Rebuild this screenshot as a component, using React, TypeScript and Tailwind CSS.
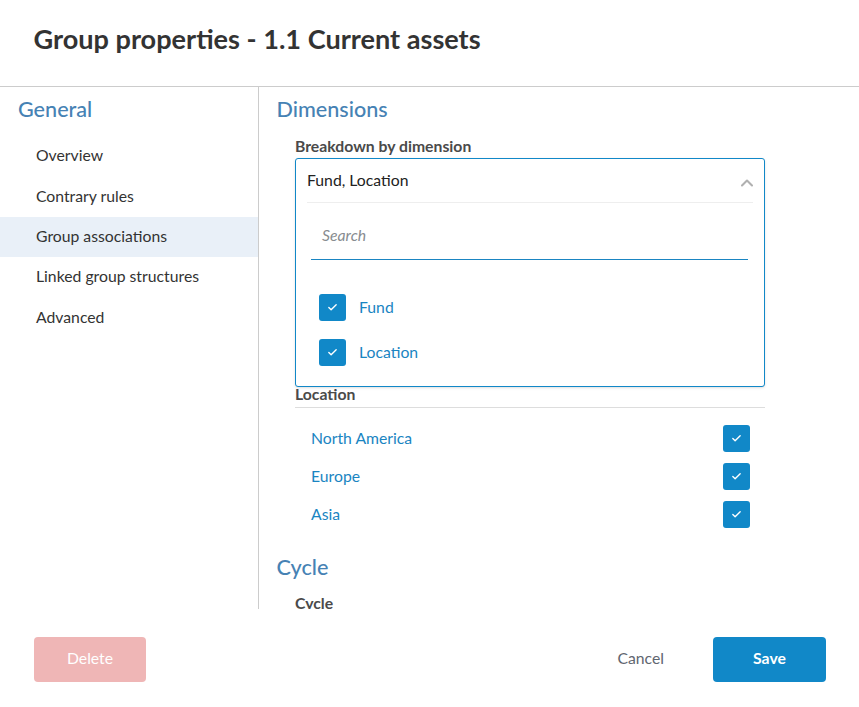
import React from "react";
import { Check, ChevronUp } from "lucide-react";

const navItems = ["Overview", "Contrary rules", "Group associations", "Linked group structures", "Advanced"];

function CheckBox() {
  return (
    <span className="flex h-[27px] w-[27px] shrink-0 items-center justify-center rounded-[3px] bg-[#1188c8] text-white">
      <Check className="h-[11px] w-[11px]" strokeWidth={3} />
    </span>
  );
}

function DimensionRow({ label }: { label: string }) {
  return (
    <div className="flex h-[38px] items-center justify-between pl-4 pr-[15px]">
      <span className="pb-[1px] text-[15.75px] text-[#1a85c2]">{label}</span>
      <CheckBox />
    </div>
  );
}

export default function App() {
  return (
    <div className="flex h-[707px] w-[859px] flex-col overflow-hidden bg-white font-['Lato',sans-serif]">
      {/* Header */}
      <div className="flex h-[87px] shrink-0 items-center border-b border-[#cccccc] pb-[7px] pl-[33.5px]">
        <h1 className="text-[27.1px] font-bold text-[#333333]">Group properties - 1.1 Current assets</h1>
      </div>

      {/* Body */}
      <div className="flex h-[522px] shrink-0 overflow-hidden">
        <div className="w-[259px] shrink-0 border-r border-[#cccccc]">
          <h2 className="pl-[18px] pt-[7px] text-[21.6px] leading-[30px] font-medium text-[#4682b4]">General</h2>
          <div className="mt-[12px] flex flex-col">
            {navItems.map((item) => (
              <div
                key={item}
                className={`flex h-[40.4px] items-center pb-[2.5px] pl-9 text-[15.75px] text-[#333333] ${item === "Group associations" ? "bg-[#e9f0f8]" : ""}`}
              >
                {item}
              </div>
            ))}
          </div>
        </div>

        <div className="min-w-0 flex-1 pl-[18px]">
          <h2 className="ml-[-0.5px] pt-[7px] text-[21.6px] leading-[30px] font-medium text-[#4682b4]">Dimensions</h2>
          <div className="relative ml-[18px] w-[470px]">
            <div className="mt-[12px] text-[15.75px] leading-[20px] font-bold text-[#4a4a4a]">Breakdown by dimension</div>

            {/* Open select, lies over the rows below it */}
            <div className="absolute left-0 top-[22px] z-10 h-[229px] w-[470px] rounded-[3px] border border-[#1188c8] bg-white shadow-sm">
              <div className="mx-[11px] flex h-[44px] items-center justify-between border-b border-[#eeeeee]">
                <span className="pb-[2px] text-[15.75px] text-[#222222]">Fund, Location</span>
                <ChevronUp className="mr-[-4px] mt-[4px] h-[20px] w-[20px] text-[#b0b0b0]" strokeWidth={2.5} />
              </div>
              <div className="ml-[15px] mr-[16px] mt-[12px] flex h-[45px] items-center border-b border-[#1a85c2] pb-[5px] pl-[11px] text-[15.75px] text-[#888c90] italic">
                Search
              </div>
              <div className="mt-[34px] flex flex-col gap-[18px] pl-[23px]">
                <div className="flex items-center gap-[13px]">
                  <CheckBox />
                  <span className="pb-[1.5px] text-[15.75px] text-[#1a85c2]">Fund</span>
                </div>
                <div className="flex items-center gap-[13px]">
                  <CheckBox />
                  <span className="pb-[1.5px] text-[15.75px] text-[#1a85c2]">Location</span>
                </div>
              </div>
            </div>

            <div className="h-[228px]" />

            <div className="border-b border-[#dddddd] pb-[3px] text-[15.75px] leading-[20px] font-bold text-[#4a4a4a]">Location</div>
            <div className="mt-[11px]">
              <DimensionRow label="North America" />
              <DimensionRow label="Europe" />
              <DimensionRow label="Asia" />
            </div>
          </div>
          <h2 className="mt-[18.5px] ml-[-0.5px] text-[21.6px] leading-[30px] font-medium text-[#4682b4]">Cycle</h2>
          <div className="mt-[11px] ml-[18px] text-[15.75px] leading-[20px] font-bold text-[#4a4a4a]">Cycle</div>
        </div>
      </div>

      {/* Footer */}
      <div className="flex flex-1 items-start justify-between pl-[34px] pr-[33px] pt-[28px]">
        <button className="h-[45px] w-[112px] rounded-[4px] bg-[#efb6b6] pb-[3px] text-[15.75px] text-white">Delete</button>
        <div className="flex items-center gap-[49px]">
          <button className="pb-[3px] text-[15.75px] text-[#5f6670]">Cancel</button>
          <button className="h-[45px] w-[113px] rounded-[4px] bg-[#1188c8] pb-[3px] text-[15.75px] font-bold text-white">Save</button>
        </div>
      </div>
    </div>
  );
}
